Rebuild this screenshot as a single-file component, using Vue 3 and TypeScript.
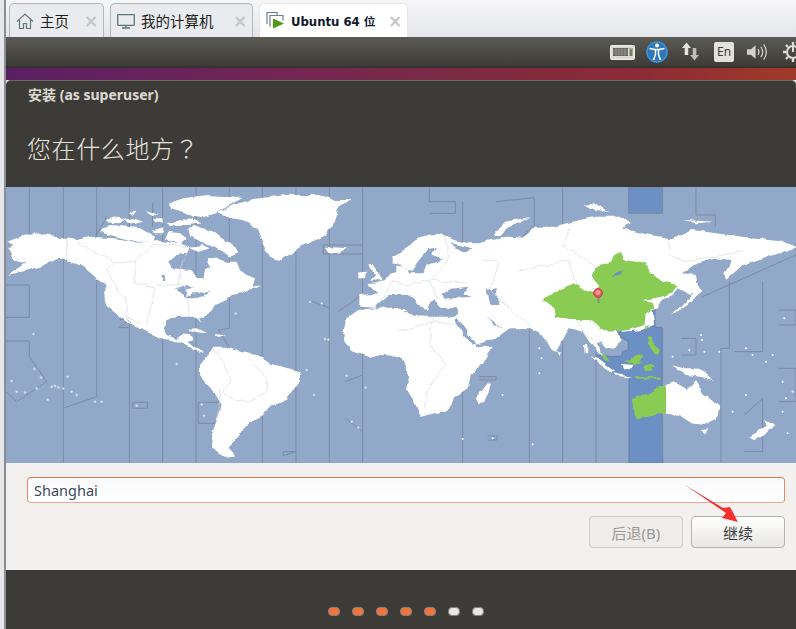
<script setup lang="ts">
interface Tab { id: string; label: string; active?: boolean }

const tabs: Tab[] = [
  { id: 'home', label: '主页' },
  { id: 'monitor', label: '我的计算机' },
  { id: 'guest', label: 'Ubuntu 64 位', active: true },
]

const steps = [true, true, true, true, true, false, false]

// map shapes are traced in the local coordinates of a few crops, each group has its own transform
const americas = [
  '22,170 60,155 100,145 150,150 200,160 235,165 270,155 340,160 380,165 415,173 470,165 495,173 545,175 570,185 560,205 530,210 508,230 520,250 570,255 595,280 610,280 615,255 628,247 620,220 645,215 680,230 710,230 720,255 740,270 765,280 760,300 785,307 750,310 725,325 695,330 680,345 645,360 625,390 598,400 605,418 590,395 565,395 530,395 500,405 488,430 500,450 530,462 555,445 585,460 562,470 585,490 612,502 600,505 570,490 540,470 490,465 440,440 405,428 375,390 395,420 350,385 320,360 310,330 320,300 290,280 250,245 200,225 170,225 120,245 60,262 20,270 60,245 75,235 40,225 35,205 25,190 40,180',
  '655,80 700,60 760,42 860,30 960,30 1000,45 1055,45 1015,70 1000,130 960,160 900,185 860,215 840,228 810,215 790,180 770,130 720,100 670,95',
  '640,485 680,485 720,500 770,510 810,535 860,550 905,565 890,600 860,645 810,660 790,690 750,710 720,745 700,770 685,790 705,812 670,815 640,790 635,750 650,710 665,660 640,620 600,570 600,540 625,510',
  '975,185 1045,190 1010,205 985,200',
  '560,432 590,430 620,445 590,442',
  '640,450 665,452 680,456 650,458',
]
const lakes = [
  '528,310 560,300 580,310 560,312 555,335 575,325 600,325 635,320 610,335 580,340 555,340 540,320',
  '480,268 488,266 497,285 490,285',
]
const arctic = [
  '295,115 320,108 370,125 395,145 430,165 445,190 420,200 395,185 365,170 335,155 300,140',
  '30,125 60,105 110,110 150,115 195,140 190,155 145,155 100,145 60,135',
  '50,90 80,80 100,90 90,100 60,98',
  '95,90 130,85 160,95 130,103',
  '115,65 140,62 130,75',
  '300,170 340,165 355,175 330,185',
  '235,125 270,130 290,145 270,160 225,150',
  '190,85 215,85 215,100 195,97',
  '165,60 205,70 190,75',
  '235,40 280,25 350,15 440,20 460,25 410,50 375,70 340,85 310,80 280,65 240,55',
  '230,100 300,85 335,100 300,105 240,105',
  '185,125 220,115 220,130 195,130',
]

const eurasia = '-110,365 -110,330 -68,327 -53,325 -83,297 -58,295 -38,285 -18,270 4,265 4,245 17,240 -13,235 -13,215 22,200 52,170 92,150 132,145 177,165 217,175 252,175 282,162 332,155 380,158 395,150 420,125 470,125 530,110 600,95 680,95 705,115 680,130 760,150 830,160 890,135 960,145 1040,155 1100,160 1150,165 1200,185 1170,200 1110,215 1040,240 990,285 985,265 1010,225 960,220 890,240 860,265 900,270 905,300 880,330 845,310 830,330 800,345 785,370 770,375 775,420 740,435 680,440 657,435 677,465 652,495 632,490 617,465 602,475 622,510 642,530 602,495 580,470 560,440 520,430 480,500 465,495 430,440 400,430 345,430 310,455 240,480 190,420 177,400 130,380 0,378 -60,368'
const seas = [
  '178,150 215,168 232,142 262,105 290,100 270,118 310,130 290,142 262,150 250,172 205,172 196,160',
  '335,85 395,100 370,112 345,100',
  '110,270 145,240 200,240 225,250 260,290 270,265 285,255 300,278 350,280 355,290 340,302 250,305 205,290 180,278 110,278',
  '305,240 330,222 385,215 370,238 395,245 340,250 312,250',
  '435,225 470,220 478,270 450,270 445,240',
]
const africaAndIslands = [
  '-158,440 -148,400 -113,375 -63,370 12,375 42,390 82,395 172,395 190,420 240,480 290,485 260,530 225,570 215,610 170,640 150,680 75,698 55,650 30,610 40,570 15,520 -30,510 -80,515 -130,500 -155,470',
  '240,640 275,595 285,600 265,650 245,655',
  '820,385 860,365 885,335 895,270 905,300 920,320 890,345 860,375',
  '295,150 330,110 405,95 340,120 320,150',
  '560,60 600,55 640,80 600,75',
  '865,105 950,110 900,115',
  '1060,755 1110,725 1105,705 1135,720 1100,755 1075,762',
  '480,498 495,500 490,510',
]
const europeTop = [
  '200,228 215,232 270,265 245,255 215,240',
  '85,150 100,150 115,175 130,195 90,197 105,180',
  '55,172 78,170 75,190 55,190',
  '465,50 500,25 575,8 520,30 490,45 480,60',
]
const europeWater = [
  '345,305 362,325 410,392 395,388 360,345 345,320',
  '405,390 465,380 412,396',
  '440,305 470,330 490,345 460,330',
]

const oceania = [
  '318,258 340,247 380,270 405,240 430,280 478,320 470,355 430,375 395,370 365,350 318,338',
  '422,390 445,388 435,400',
  '335,195 370,205 400,205 430,215 460,240 420,230 380,225',
  '92,168 115,178 165,215 155,218 115,190',
  '160,220 215,230 210,233 165,227',
  '183,192 220,195 215,205 190,205',
  '72,135 82,135 82,160 74,160',
]
const greens = [
  '440,345 480,320 530,295 560,315 600,325 610,300 590,270 600,245 640,235 655,210 675,200 685,225 720,230 745,230 765,265 800,290 845,300 830,320 800,335 740,345 770,350 775,370 750,385 745,420 700,435 640,440 610,425 590,405 520,405 480,395 475,370',
]
const greensSea = [
  '215,297 265,280 298,258 318,258 318,338 285,345 235,357 222,330',
  '120,165 135,165 150,185 135,180',
  '190,185 230,168 250,165 240,185 220,195 215,185',
  '258,108 272,110 275,130 300,150 295,165 280,160 262,135',
  '250,200 265,192 285,200 270,205 280,215 255,215',
  '225,232 300,230 300,236 225,236',
  '180,85 190,82 183,98',
  '258,78 268,75 260,90',
]

const zones = [
  '88,7 88,165', '190,7 190,835', '290,7 290,150 320,95', '290,150 290,635 190,670', '388,7 388,835', '488,7 488,835', '588,7 588,835',
  '688,7 688,430 655,435 690,490 688,650', '787,7 787,835', '888,7 888,835', '988,7 988,835', '1088,7 1088,835',
  '18,300 88,300 88,397 18,397', '18,468 88,468 88,515 140,590 50,650 18,620', '458,55 458,125', '925,345 988,368',
  '1035,590 1088,570', '1015,380 1085,330', '1037,700 1088,740', '970,180 1088,180', '970,180 970,207 1088,207',
  '595,652 665,652', '595,652 595,715 650,715', '398,652 442,652 442,670 398,670 398,652', '850,800 888,800 850,812 850,800', '358,404 388,404 358,428 388,428',
]
const zonesRight = [
  '100,7 100,50 178,50 178,85 100,85', '200,50 200,835', '300,50 415,38 415,120 380,155', '400,430 400,835', '500,7 500,835', '600,500 600,835',
  '900,7 900,90 958,90 958,125', '1000,290 1000,490 975,490 975,835', '1100,290 1100,500 1015,500', '1200,210 920,335', '800,430 800,835',
  '855,460 900,460 900,510 855,510', '1045,690 1100,640 1100,800 1045,800', '1150,375 1200,375 1200,420 1150,420', '1150,550 1200,550 1200,650 1150,650',
  '250,575 300,575 300,585 250,585', '275,753 303,753 303,765 275,765',
]

const bordersLeft = [
  '200,160 200,225', '230,170 340,230 320,255 350,310 380,340 378,390 425,420', '405,230 405,295 465,310 440,420', '340,230 405,230 460,178 570,185 540,250 535,300', '465,300 555,300 570,395',
  '640,490 672,530 690,590 670,620 690,640 750,650 800,620 800,580 745,520', '660,610 655,700',
]
const bordersRight = [
  '110,395 100,480 150,540 90,620 85,690', '0,440 110,410 190,420', '145,150 160,220 100,290 130,345', '260,225 310,230 280,310 350,380 420,440', '360,260 520,225 540,300 440,345', '820,160 820,210 870,230 1040,200', '520,130 500,180 600,245', '-60,365 -10,290 40,300 100,285 215,295', '540,400 560,440 620,480',
]
const dots = [
  [100, 447], [103, 552], [123, 577], [203, 575], [155, 605], [165, 603], [175, 607], [190, 610], [215, 620], [230, 630], [110, 610], [75, 622], [50, 620], [35, 588], [143, 644], [285, 650], [305, 650], [410, 662], [530, 537], [605, 658], [612, 692], [707, 385], [930, 350], [965, 355], [975, 462], [985, 464], [920, 555], [942, 630], [1097, 608], [1055, 710], [1075, 728], [1040, 572],
]
const dotsRight = [
  [430, 490], [437, 520], [430, 565], [915, 450], [918, 465], [925, 500], [880, 495], [970, 500], [1050, 490], [1070, 510], [1110, 530], [1130, 510], [830, 515], [1160, 590], [1190, 620], [1170, 640], [1050, 630], [320, 630], [410, 778], [200, 762], [1165, 400], [1010, 680], [1160, 680], [1175, 745], [290, 760],
]
</script>

<template>
  <div class="screen">
    <div class="rail"></div>
    <div class="main">
      <div class="tabstrip">
        <div v-for="tab in tabs" :key="tab.id" class="tab" :class="['tab-' + tab.id, { active: tab.active }]">
          <svg v-if="tab.id === 'home'" class="tab-icon" width="18" height="18" viewBox="0 0 18 18" fill="none" stroke="#5d7483" stroke-width="1.2">
            <path d="M1 9.500 9 2l8 7.500M3.500 8v8.500h4v-5h3v5h4V8" />
          </svg>
          <svg v-else-if="tab.id === 'monitor'" class="tab-icon" width="18" height="18" viewBox="0 0 18 18" fill="none" stroke="#5d7483" stroke-width="1.3">
            <rect x="0.7" y="2.700" width="16.600" height="10.600" rx="0.500" />
            <path d="M5 16h8M9 13.500V16" />
          </svg>
          <svg v-else class="tab-icon" width="19" height="19" viewBox="0 0 19 19" fill="none">
            <path d="M1 13V1.500h10V4M4 15.500V4.500h13v5" stroke="#6b7f8c" stroke-width="1.200" />
            <path d="M7 7.500v10l11-5z" fill="#4c9a14" />
          </svg>
          <span class="tab-label">{{ tab.label }}</span>
          <span class="tab-close">×</span>
        </div>
      </div>

      <div class="guest">
        <div class="panel">
          <svg class="tray-kb" width="25" height="15" viewBox="0 0 25 15">
            <rect x="0.500" y="0.500" width="24" height="14" rx="1" fill="#dddbd4" stroke="#f1efe9" />
            <rect x="3" y="3" width="15" height="8" fill="#5b5a55" />
            <path d="M3 5h15M3 7h15M3 9h15M6 3v8M9 3v8M12 3v8M15 3v8" stroke="#a5a39d" stroke-width="0.700" />
            <rect x="19.500" y="3" width="3" height="8" fill="#77766f" />
            <rect x="20" y="3" width="2" height="1.500" fill="#8ccf5a" />
          </svg>
          <svg class="tray-a11y" width="24" height="24" viewBox="0 0 24 24">
            <circle cx="12" cy="12" r="11" fill="#2f77b8" />
            <circle cx="12" cy="12" r="10" fill="none" stroke="#4f97d4" />
            <circle cx="12" cy="5.500" r="2" fill="#fff" />
            <path d="M4.500 8.500 10 9.500h4l5.500-1M10.500 9.500v5L8.500 20M13.500 9.500v5l2 5.500" fill="none" stroke="#fff" stroke-width="1.500" />
          </svg>
          <svg class="tray-net" width="17" height="19" viewBox="0 0 19 20" fill="#e4e2dc">
            <path d="M5 0 0 6h3v8h4V6h3z" />
            <path d="M14 20l5-6h-3V6h-4v8H9z" fill="#bdbbb5" />
          </svg>
          <span class="tray-lang">En</span>
          <svg class="tray-vol" width="20" height="18" viewBox="0 0 21 18" fill="none">
            <path d="M0 6h4l5-4v14l-5-4H0z" fill="#d2d0ca" />
            <path d="M11.500 6c1.500 2 1.500 4 0 6M14.500 3.500c2.500 3.500 2.500 7.500 0 11M17.500 1c3.500 5 3.500 11 0 16" stroke="#d2d0ca" stroke-width="1.300" />
          </svg>
          <svg class="tray-power" width="20" height="20" viewBox="0 0 20 20" fill="none" stroke="#dfddd7">
            <circle cx="10" cy="10" r="6" stroke-width="2" />
            <path d="M10 1v9" stroke-width="2" />
            <path d="M10 0v3M10 17v3M0 10h3M17 10h3M3 3l2 2M15 15l2 2M3 17l2-2" stroke-width="2.400" />
          </svg>
        </div>
        <div class="wallpaper"></div>

        <div class="window">
          <div class="window-title">安装 (as superuser)</div>
          <h1 class="heading">您在什么地方<span class="qmark">？</span></h1>

          <svg class="map" viewBox="6 187 790 276" width="790" height="276" preserveAspectRatio="none">
            <defs>
              <!-- roughens the straight traced edges into something like a coastline -->
              <filter id="coast" x="6" y="187" width="790" height="276" filterUnits="userSpaceOnUse" primitiveUnits="userSpaceOnUse">
                <feTurbulence type="fractalNoise" baseFrequency="0.09" numOctaves="3" seed="4" />
                <feDisplacementMap in="SourceGraphic" scale="5" xChannelSelector="R" yChannelSelector="G" />
              </filter>
            </defs>
            <rect x="6" y="187" width="790" height="276" fill="#92a8c8" />
            <g transform="translate(396 185) scale(0.3333)">
              <polygon points="698,7 800,7 800,85 698,85" fill="#6c8fc4" stroke="#7a8aa3" stroke-width="3" />
              <polygon points="597,510 647,515 677,513 680,500 697,495 697,470 670,453 670,440 742,430 777,350 777,427 797,427 800,835 699,835 699,580 652,567" fill="#6c8fc4" stroke="#6480aa" stroke-width="3" />
            </g>
            <g transform="translate(0 185) scale(0.3333)" fill="none" stroke="#7b8ba6" stroke-width="3">
              <polyline v-for="z in zones" :key="z" :points="z" />
            </g>
            <g transform="translate(396 185) scale(0.3333)" fill="none" stroke="#7b8ba6" stroke-width="3">
              <polyline v-for="z in zonesRight" :key="z" :points="z" />
            </g>

            <g filter="url(#coast)">
              <g transform="translate(0 185) scale(0.3333)" fill="#fff">
                <polygon v-for="p in americas" :key="p" :points="p" />
                <polygon v-for="p in lakes" :key="p" :points="p" fill="#92a8c8" />
                <polyline v-for="b in bordersLeft" :key="b" :points="b" fill="none" stroke="#d5d8dc" stroke-width="2" />
              </g>
              <g transform="translate(90 190) scale(0.3333)" fill="#fff">
                <polygon v-for="p in arctic" :key="p" :points="p" />
              </g>
              <g transform="translate(396 185) scale(0.3333)" fill="#fff">
                <polygon :points="eurasia" />
              </g>
              <g transform="translate(340 215) scale(0.3333)" fill="#92a8c8">
                <polygon v-for="p in seas" :key="p" :points="p" />
              </g>
              <g transform="translate(396 185) scale(0.3333)" fill="#fff">
                <polygon v-for="p in africaAndIslands" :key="p" :points="p" />
                <polyline v-for="b in bordersRight" :key="b" :points="b" fill="none" stroke="#d5d8dc" stroke-width="2" />
              </g>
              <g transform="translate(340 215) scale(0.3333)">
                <polygon v-for="p in europeWater" :key="p" :points="p" fill="#92a8c8" />
                <polygon v-for="p in europeTop" :key="p" :points="p" fill="#fff" />
              </g>
              <g transform="translate(560 300) scale(0.3333)">
                <polygon v-for="p in oceania" :key="p" :points="p" fill="#fff" />
                <polygon v-for="p in greensSea" :key="p" :points="p" fill="#8acb52" />
              </g>
              <g transform="translate(396 185) scale(0.3333)">
                <polygon v-for="p in greens" :key="p" :points="p" fill="#8acb52" />
                <path d="M645 280 670 262 682 255 672 272z" fill="#6c8fc4" />
              </g>
            </g>

            <g transform="translate(0 185) scale(0.3333)" fill="#fff">
              <circle v-for="d in dots" :key="d.join()" :cx="d[0]" :cy="d[1]" r="3" />
            </g>
            <g transform="translate(396 185) scale(0.3333)" fill="#fff">
              <circle v-for="d in dotsRight" :key="d.join()" :cx="d[0]" :cy="d[1]" r="3" />
            </g>

            <path d="M598.500 296v7" stroke="#8a8a8a" stroke-width="2" />
            <circle cx="598" cy="293" r="4.500" fill="#e0565a" stroke="#c8393f" stroke-width="0.800" />
            <circle cx="598" cy="292.500" r="2.500" fill="#f29a9a" />
          </svg>

          <div class="form">
            <input class="location" type="text" value="Shanghai" />
            <div class="actions">
              <button class="btn" disabled>后退(B)</button>
              <button class="btn primary">继续</button>
            </div>
          </div>

          <div class="footer">
            <span v-for="(done, i) in steps" :key="i" class="step" :class="{ done }"></span>
          </div>
        </div>
      </div>
    </div>

    <svg class="annotation" width="60" height="45" viewBox="0 0 60 45">
      <polygon points="0,0 38,23 45,22 53,37 37,33 41,28" fill="#f5302e" />
    </svg>
  </div>
</template>

<style>
html, body { margin: 0; background: #e6e7ea; }
</style>

<style scoped>
.screen {
  position: relative;
  display: flex;
  width: 796px;
  height: 629px;
  overflow: hidden;
  font-family: "Noto Sans", "Noto Sans CJK SC", sans-serif;
  background: #e6e7ea;
}
.rail { flex: none; width: 4px; border-right: 2px solid #8d8e90; }
.main { flex: 1; min-width: 0; display: flex; flex-direction: column; }

.tabstrip { flex: none; display: flex; gap: 6px; height: 37px; padding: 3px 0 0 3px; box-sizing: border-box; background: linear-gradient(#f7f7f8, #e4e5e9); }
.tab {
  flex: none;
  display: flex;
  align-items: center;
  box-sizing: border-box;
  height: 34px;
  padding: 0 5px 0 6px;
  border: 1px solid #b4b7ba;
  border-bottom: none;
  border-radius: 5px 5px 0 0;
  background: #e9ebee;
  color: #1c1c1c;
  font-family: "Noto Sans CJK SC", sans-serif;
  font-size: 14.500px;
}
.tab-home { width: 95px; }
.tab-monitor { width: 143px; }
.tab-guest { width: 149px; }
.tab.active { background: #fff; border-color: #e6e7ea; font-family: "DejaVu Sans", "Noto Sans CJK SC", sans-serif; font-size: 11.700px; font-weight: 700; color: #10182c; }
.tab-icon { flex: none; margin-right: 6px; }
.tab-label { flex: 1; white-space: nowrap; }
.tab-close { flex: none; width: 14px; color: #c3c5c8; font-family: "DejaVu Sans", sans-serif; font-size: 17px; font-weight: 700; text-align: center; }

.guest { flex: 1; min-height: 0; display: flex; flex-direction: column; }
.panel {
  flex: none;
  display: flex;
  align-items: center;
  height: 29px;
  background: linear-gradient(#5b5a54, #3c3b37);
  overflow: hidden;
  padding-left: 604px;
}
.tray-kb { flex: none; margin-top: 1px; }
.tray-a11y { flex: none; margin: 1px 0 0 10px; }
.tray-net { flex: none; margin: 0 0 0 13px; }
.tray-lang {
  flex: none;
  width: 20px;
  height: 20px;
  margin: 0 0 0 15px;
  border-radius: 2px;
  background: #e3e1db;
  color: #3c3b37;
  font-size: 12px;
  line-height: 20px;
  text-align: center;
}
.tray-vol { flex: none; margin: 0 0 0 13px; }
.tray-power { flex: none; margin: 0 0 0 16px; }
.wallpaper {
  flex: none;
  height: 14px;
  border-top: 2px solid #35342f;
  box-sizing: border-box;
  background: linear-gradient(90deg, #5a1f63 0%, #6f2556 30%, #7a2a45 55%, #8c2a36 80%, #a03a28 100%);
}

.window { flex: 1; min-height: 0; display: flex; flex-direction: column; background: #3c3b37; border-radius: 5px 5px 0 0; border-top: 1px solid #6a6964; }
.window-title { flex: none; margin: 5px 0 0 22px; color: #dedbd4; font-size: 14px; font-weight: 700; line-height: 18px; }
.heading { flex: none; margin: 27px 0 0 21px; height: 33px; color: #e8e5df; font-family: "Noto Sans CJK SC", sans-serif; font-size: 24px; font-weight: 300; letter-spacing: 0.600px; line-height: 33px; }
.qmark { font-family: "Noto Sans CJK TC", sans-serif; }
.map { flex: none; display: block; margin-top: 23px; }

.form { flex: none; display: flex; flex-direction: column; height: 107px; padding: 14px 11px 0 21px; box-sizing: border-box; background: #f2f1f0; }
.location {
  display: block;
  box-sizing: border-box;
  width: 100%;
  height: 26px;
  padding: 0 6px;
  border: 1px solid #e88a68;
  border-top-color: #e57a50;
  border-bottom-color: #f3a78a;
  border-radius: 4px;
  outline: none;
  background: linear-gradient(#f9f9f9, #fff);
  color: #3c4a5e;
  font-family: "Noto Sans", sans-serif;
  font-size: 14.500px;
}
.actions { display: flex; justify-content: flex-end; gap: 8px; margin-top: 13px; }
.btn {
  width: 94px;
  height: 32px;
  padding: 0;
  border: 1px solid #b5b3ae;
  border-radius: 4px;
  background: linear-gradient(#fff, #e8e7e5);
  color: #3c3c3c;
  font-family: "Noto Sans", "Noto Sans CJK SC", sans-serif;
  font-size: 15px;
}
.btn:disabled { border-color: #cfcdca; background: #eeedec; color: #9a9996; }

.footer { flex: 1; display: flex; justify-content: center; align-items: flex-start; gap: 12px; padding: 37px 0 0 10px; }
.step { flex: none; box-sizing: content-box; width: 10px; height: 7px; border: 1px solid #85837e; border-radius: 4px; background: #e8e8e6; }
.step.done { background: #f0743c; }

.annotation { position: absolute; left: 685px; top: 485px; pointer-events: none; }
</style>
